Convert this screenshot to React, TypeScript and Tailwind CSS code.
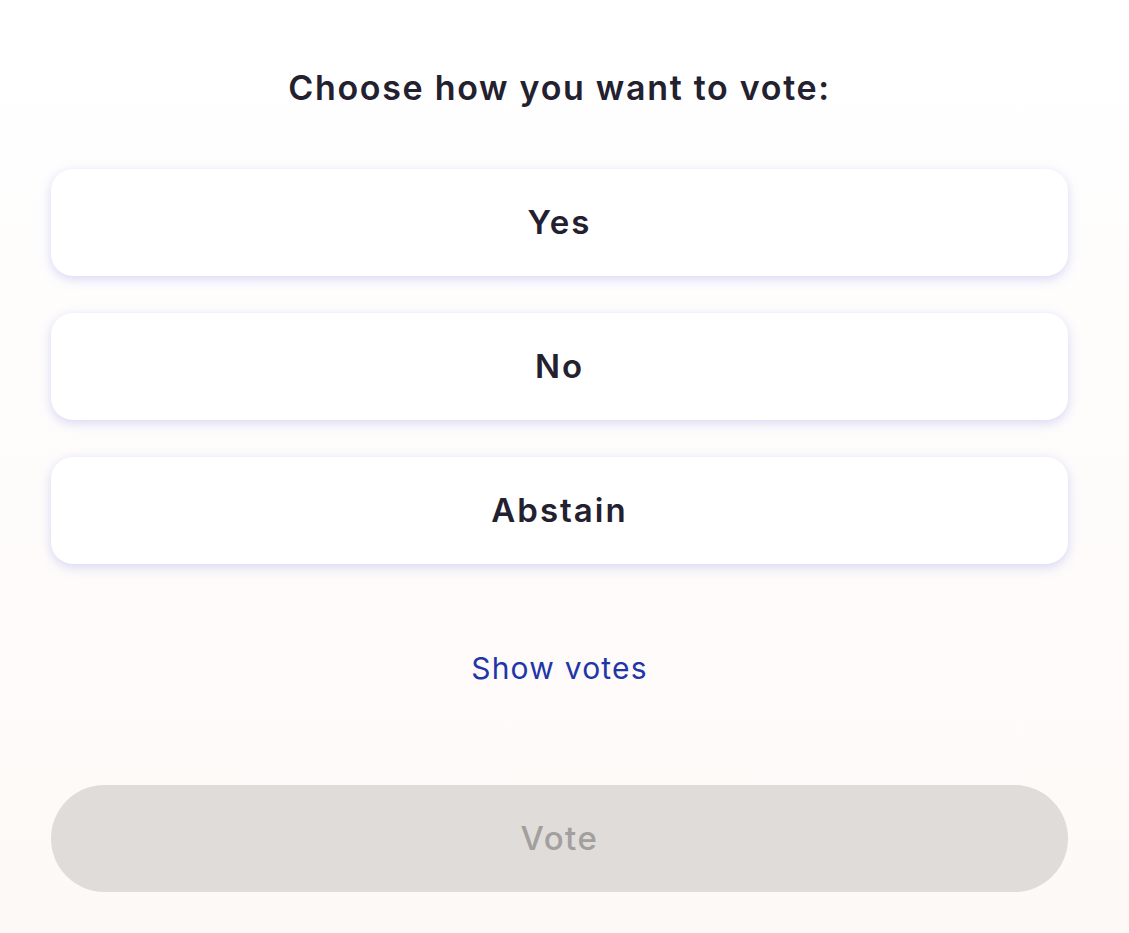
export default function App() {
  const options = ["Yes", "No", "Abstain"];
  return (
    <div
      className="min-h-[933px] w-full bg-gradient-to-b from-[#ffffff] to-[#fdf9f7] pl-[51px] pr-[61px] pt-[62px] pb-[40px]"
      style={{ fontFamily: '"Inter", "Noto Sans", sans-serif' }}
    >
      <h1 className="text-center text-[34px] leading-[52px] font-semibold text-[#23212f] tracking-[1.7px]">
        Choose how you want to vote:
      </h1>
      <div className="mt-[55px] flex flex-col gap-[37px]">
        {options.map((o) => (
          <button
            key={o}
            className="h-[107px] w-full rounded-[22px] bg-white text-[33px] font-semibold tracking-[2px] text-[#23212f] shadow-[0_3px_12px_rgba(110,115,225,0.28)]"
          >
            {o}
          </button>
        ))}
      </div>
      <div className="mt-[84px] flex justify-center">
        <span className="text-[30px] leading-[40px] tracking-[1.2px] text-[#1f36a9]">Show votes</span>
      </div>
      <button className="mt-[97px] h-[107px] w-full rounded-full bg-[#dfdcda] text-[33px] font-medium tracking-[1.5px] text-[#a29f9d]">
        Vote
      </button>
    </div>
  );
}
